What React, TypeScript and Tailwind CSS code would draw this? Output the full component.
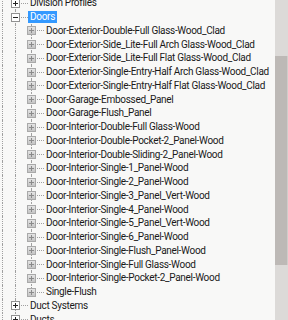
import React from "react";

type Exp = "plus" | "minus" | "grey" | null;
type V = "full" | "top" | "none";

const Expander = ({ kind }: { kind: Exp }) => {
  if (!kind) return null;
  if (kind === "grey") {
    return (
      <div className="[grid-area:1/1] self-center ml-[3px] w-[9px] h-[9px] border border-[#a9a9a9] bg-gradient-to-b from-[#e4e4e4] to-[#c4c4c4] flex items-center justify-center">
        <svg width="7" height="7" viewBox="0 0 7 7">
          <rect x="1" y="3" width="5" height="1" fill="#8a8a8a" />
          <rect x="3" y="1" width="1" height="5" fill="#8a8a8a" />
        </svg>
      </div>
    );
  }
  return (
    <div className="[grid-area:1/1] self-center ml-[3px] w-[9px] h-[9px] border border-[#919191] bg-white flex items-center justify-center">
      <svg width="7" height="7" viewBox="0 0 7 7">
        <rect x="1" y="3" width="5" height="1" fill="#222" />
        {kind === "plus" && <rect x="3" y="1" width="1" height="5" fill="#222" />}
      </svg>
    </div>
  );
};

const Connector = ({ v, exp }: { v: V; exp: Exp }) => (
  <div className="grid w-[20px] h-full shrink-0">
    {v !== "none" && (
      <div
        className={
          "[grid-area:1/1] self-start ml-[7px] border-l border-dotted border-[#a0a0a0] " +
          (v === "full" ? "h-full" : "h-1/2")
        }
      />
    )}
    <div className="[grid-area:1/1] self-center ml-[8px] h-0 border-t border-dotted border-[#a0a0a0]" />
    <Expander kind={exp} />
  </div>
);

const Pass = () => (
  <div className="w-[16px] h-full shrink-0">
    <div className="ml-[7px] h-full border-l border-dotted border-[#a0a0a0]" />
  </div>
);

const children = [
  "Door-Exterior-Double-Full Glass-Wood_Clad",
  "Door-Exterior-Side_Lite-Full Arch Glass-Wood_Clad",
  "Door-Exterior-Side_Lite-Full Flat Glass-Wood_Clad",
  "Door-Exterior-Single-Entry-Half Arch Glass-Wood_Clad",
  "Door-Exterior-Single-Entry-Half Flat Glass-Wood_Clad",
  "Door-Garage-Embossed_Panel",
  "Door-Garage-Flush_Panel",
  "Door-Interior-Double-Full Glass-Wood",
  "Door-Interior-Double-Pocket-2_Panel-Wood",
  "Door-Interior-Double-Sliding-2_Panel-Wood",
  "Door-Interior-Single-1_Panel-Wood",
  "Door-Interior-Single-2_Panel-Wood",
  "Door-Interior-Single-3_Panel_Vert-Wood",
  "Door-Interior-Single-4_Panel-Wood",
  "Door-Interior-Single-5_Panel_Vert-Wood",
  "Door-Interior-Single-6_Panel-Wood",
  "Door-Interior-Single-Flush_Panel-Wood",
  "Door-Interior-Single-Full Glass-Wood",
  "Door-Interior-Single-Pocket-2_Panel-Wood",
  "Single-Flush",
];

const Row = ({ children }: { children: React.ReactNode }) => (
  <div className="flex items-stretch h-[13.75px] whitespace-nowrap">
    <div className="w-[8px] h-full shrink-0">
      <div className="ml-[2px] h-full border-l border-dotted border-[#a0a0a0]" />
    </div>
    {children}
  </div>
);

const Label = ({ text, selected }: { text: string; selected?: boolean }) => (
  <div className="flex items-center h-full">
    <span
      className={
        "px-[2px] leading-[12px] " +
        (selected ? "bg-[#3399ff] text-white" : "text-[#1a1a1a]")
      }
    >
      {text}
    </span>
  </div>
);

export default function App() {
  return (
    <div
      className="w-[288px] h-[320px] overflow-hidden flex bg-[#f8f8f7] text-[10px] tracking-[-0.3px]"
      style={{ fontFamily: 'Roboto, "Open Sans", sans-serif' }}
    >
      <div className="flex-1 min-w-0 overflow-hidden">
        <div className="mt-[-3.6px]">
          <Row>
            <Connector v="full" exp="plus" />
            <Label text="Division Profiles" />
          </Row>
          <Row>
            <Connector v="full" exp="minus" />
            <Label text="Doors" selected />
          </Row>
          {children.map((c, i) => (
            <Row key={c}>
              <Pass />
              <Connector v={i === children.length - 1 ? "top" : "full"} exp="grey" />
              <Label text={c} />
            </Row>
          ))}
          <Row>
            <Connector v="full" exp="plus" />
            <Label text="Duct Systems" />
          </Row>
          <Row>
            <Connector v="full" exp="plus" />
            <Label text="Ducts" />
          </Row>
        </div>
      </div>
      <div className="w-[13px] shrink-0 h-full bg-[#dcdad8] flex flex-col">
        <div className="h-[56px]" />
        <div className="h-[209px] bg-[#bdb9b6] border-r border-[#d0cdca]" />
      </div>
    </div>
  );
}
